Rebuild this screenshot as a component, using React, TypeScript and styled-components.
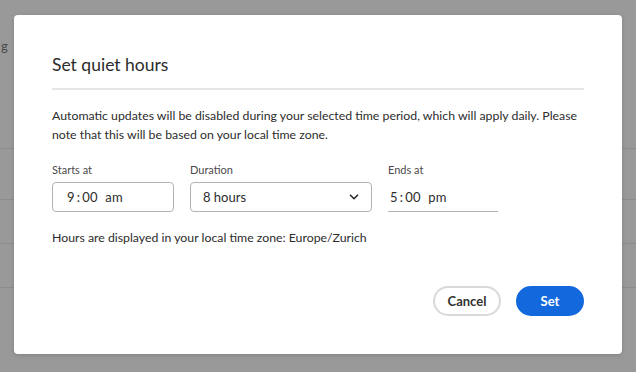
import React from 'react';
import styled, {createGlobalStyle} from 'styled-components';

const GlobalStyle = createGlobalStyle`
  html, body {
    margin: 0;
    padding: 0;
    width: 636px;
    height: 372px;
    overflow: hidden;
    background: #999999;
    font-family: Lato, "Open Sans", sans-serif;
  }
`

const Page = styled.div`
  width: 636px;
  height: 372px;
  position: relative;
  background: #999999;
`

const PageHeading = styled.div`
  height: 148px;
  box-sizing: border-box;
  padding: 38px 0 0 1px;
  font-size: 13px;
  color: #4a4a4a;
`

const PageRow = styled.div<{ $h: number }>`
  height: ${p => p.$h}px;
  border-top: 1px solid #8c8c8c;
  box-sizing: border-box;
`

const Overlay = styled.div`
  position: absolute;
  inset: 0;
  display: flex;
  padding: 15px 14px 18px 14px;
  box-sizing: border-box;
`

const Dialog = styled.div`
  flex: 1;
  background: #ffffff;
  border-radius: 4px;
  box-shadow: 0 1px 4px rgba(0, 0, 0, 0.15);
  padding: 38px 38px 38px 38px;
  display: flex;
  flex-direction: column;
  box-sizing: border-box;
`

const Title = styled.h2`
  margin: 0;
  font-size: 17.5px;
  font-weight: 400;
  color: #2c2c2c;
  line-height: 24px;
  padding-bottom: 11px;
  border-bottom: 2px solid #e6e6e6;
`

const Body = styled.p`
  margin: 16px 0 0;
  font-size: 12.3px;
  line-height: 19px;
  color: #2c2c2c;
`

const Fields = styled.div`
  display: flex;
  gap: 16px;
  margin-top: 19px;
`

const Field = styled.div`
  display: flex;
  flex-direction: column;
`

const Label = styled.span`
  font-size: 11px;
  color: #4b4b4b;
  line-height: 14px;
  margin-bottom: 5px;
`

const Box = styled.div<{ $w: number }>`
  width: ${p => p.$w}px;
  height: 30px;
  box-sizing: border-box;
  border: 1px solid #b3b3b3;
  border-radius: 4px;
  display: flex;
  align-items: center;
  justify-content: space-between;
  padding: 0 12px 0 12px;
  font-size: 13px;
  color: #2c2c2c;
`

const Underlined = styled.div`
  width: 110px;
  height: 30px;
  box-sizing: border-box;
  border-bottom: 1px solid #b3b3b3;
  display: flex;
  align-items: center;
  padding-left: 2px;
  font-size: 13px;
  color: #2c2c2c;
`

const TimeText = styled.span<{ $pad?: number }>`
  padding-left: ${p => p.$pad ?? 0}px;
  letter-spacing: 0.3px;
`

const Helper = styled.p`
  margin: 17px 0 0;
  font-size: 12.3px;
  line-height: 18px;
  color: #2c2c2c;
`

const Footer = styled.div`
  margin-top: auto;
  display: flex;
  justify-content: flex-end;
  gap: 15px;
`

const Button = styled.button<{ $primary?: boolean }>`
  height: 30px;
  min-width: 68px;
  padding: 0 12px;
  border-radius: 16px;
  font-family: Lato, "Open Sans", sans-serif;
  font-size: 13px;
  font-weight: 700;
  cursor: pointer;
  border: 2px solid ${p => (p.$primary ? '#1368dd' : '#d9d9d9')};
  background: ${p => (p.$primary ? '#1368dd' : '#ffffff')};
  color: ${p => (p.$primary ? '#ffffff' : '#323232')};
`

const Chevron = () => (
  <svg width="10" height="10" viewBox="0 0 10 10">
    <path d="M1.5 3.2 L5 6.7 L8.5 3.2" fill="none" stroke="#2c2c2c" strokeWidth="1.6"
          strokeLinecap="round" strokeLinejoin="round"/>
  </svg>
)

export default function App() {
  return (
    <>
      <GlobalStyle/>
      <Page>
        <PageHeading>g</PageHeading>
        <PageRow $h={51}/>
        <PageRow $h={44}/>
        <PageRow $h={44}/>
        <PageRow $h={84}/>
        <Overlay>
          <Dialog>
            <Title>Set quiet hours</Title>
            <Body>
              Automatic updates will be disabled during your selected time period, which will apply daily. Please
              note that this will be based on your local time zone.
            </Body>
            <Fields>
              <Field>
                <Label>Starts at</Label>
                <Box $w={122}><TimeText $pad={2}>9{'\u2009'}:{'\u2009'}00 &nbsp;am</TimeText></Box>
              </Field>
              <Field>
                <Label>Duration</Label>
                <Box $w={182}>
                  <span>8 hours</span>
                  <Chevron/>
                </Box>
              </Field>
              <Field>
                <Label>Ends at</Label>
                <Underlined><TimeText>5{'\u2009'}:{'\u2009'}00 &nbsp;pm</TimeText></Underlined>
              </Field>
            </Fields>
            <Helper>Hours are displayed in your local time zone: Europe/Zurich</Helper>
            <Footer>
              <Button>Cancel</Button>
              <Button $primary>Set</Button>
            </Footer>
          </Dialog>
        </Overlay>
      </Page>
    </>
  );
}
